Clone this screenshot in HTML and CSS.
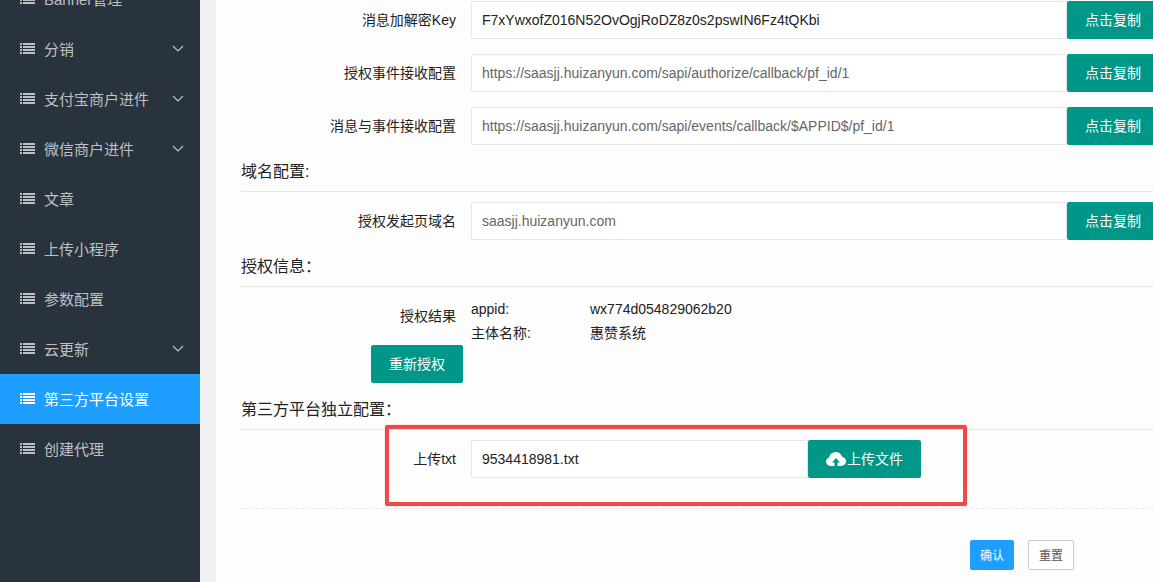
FILE: index.html
```html
<!DOCTYPE html>
<html lang="zh-CN">
<head>
  <meta charset="UTF-8" />
  <meta name="viewport" content="width=device-width, initial-scale=1.0"/>
  <title>第三方平台设置</title>
  <link rel="stylesheet" href="styles.css">
</head>
<body>
  <svg width="0" height="0" class="sprite" aria-hidden="true">
    <symbol id="icon-list" viewBox="0 0 15 11">
      <path d="M0 0h2v2H0zM3 0h12v2H3zM0 3h2v2H0zM3 3h12v2H3zM0 6h2v2H0zM3 6h12v2H3zM0 9h2v2H0zM3 9h12v2H3z"/>
    </symbol>
    <symbol id="icon-down" viewBox="0 0 12 8">
      <path d="M1 1l5 5 5-5" fill="none" stroke="currentColor" stroke-width="1.2"/>
    </symbol>
  </svg>

  <div class="layout">
    <!-- SIDE MENU -->
    <nav class="side">
      <a href="#" class="side-item"><svg class="list"><use href="#icon-list"/></svg><span>Banner管理</span></a>
      <a href="#" class="side-item"><svg class="list"><use href="#icon-list"/></svg><span>分销</span><svg class="down"><use href="#icon-down"/></svg></a>
      <a href="#" class="side-item"><svg class="list"><use href="#icon-list"/></svg><span>支付宝商户进件</span><svg class="down"><use href="#icon-down"/></svg></a>
      <a href="#" class="side-item"><svg class="list"><use href="#icon-list"/></svg><span>微信商户进件</span><svg class="down"><use href="#icon-down"/></svg></a>
      <a href="#" class="side-item"><svg class="list"><use href="#icon-list"/></svg><span>文章</span></a>
      <a href="#" class="side-item"><svg class="list"><use href="#icon-list"/></svg><span>上传小程序</span></a>
      <a href="#" class="side-item"><svg class="list"><use href="#icon-list"/></svg><span>参数配置</span></a>
      <a href="#" class="side-item"><svg class="list"><use href="#icon-list"/></svg><span>云更新</span><svg class="down"><use href="#icon-down"/></svg></a>
      <a href="#" class="side-item active"><svg class="list"><use href="#icon-list"/></svg><span>第三方平台设置</span></a>
      <a href="#" class="side-item"><svg class="list"><use href="#icon-list"/></svg><span>创建代理</span></a>
    </nav>

    <!-- SETTINGS FORM -->
    <main class="main">
      <form class="form">
        <div class="row">
          <label for="key">消息加解密Key</label>
          <input type="text" id="key" class="dark" value="F7xYwxofZ016N52OvOgjRoDZ8z0s2pswIN6Fz4tQKbi">
          <button type="button" class="btn">点击复制</button>
        </div>
        <div class="row">
          <label for="auth_url">授权事件接收配置</label>
          <input type="text" id="auth_url" value="https://saasjj.huizanyun.com/sapi/authorize/callback/pf_id/1" readonly>
          <button type="button" class="btn">点击复制</button>
        </div>
        <div class="row">
          <label for="event_url">消息与事件接收配置</label>
          <input type="text" id="event_url" value="https://saasjj.huizanyun.com/sapi/events/callback/$APPID$/pf_id/1" readonly>
          <button type="button" class="btn">点击复制</button>
        </div>

        <h2>域名配置:</h2>
        <div class="row">
          <label for="domain">授权发起页域名</label>
          <input type="text" id="domain" value="saasjj.huizanyun.com" readonly>
          <button type="button" class="btn">点击复制</button>
        </div>

        <h2>授权信息：</h2>
        <div class="result">
          <span class="result-label">授权结果</span>
          <dl>
            <dt>appid:</dt>
            <dd>wx774d054829062b20</dd>
            <dt>主体名称:</dt>
            <dd>惠赞系统</dd>
          </dl>
        </div>
        <div class="reauth">
          <button type="button" class="btn">重新授权</button>
        </div>

        <h2>第三方平台独立配置：</h2>
        <div class="row upload">
          <label for="txt">上传txt</label>
          <input type="text" id="txt" class="dark" value="9534418981.txt">
          <button type="button" class="btn">
            <svg class="cloud" viewBox="0 0 20 14" aria-hidden="true">
              <path fill="currentColor" fill-rule="evenodd" d="M5 14C2 14 0 12 0 9.500 0 7.500 1.300 6 3.300 5.500 3.800 2.300 6.500 0 9.800 0c2.900 0 5.200 1.700 6 4.500C18.300 5 20 7 20 9.300 20 12 18 14 15.200 14H11.500V10.500h2.500L10 6 6 10.500h2.500V14z"/>
            </svg>上传文件
          </button>
          <div class="highlight"></div>
        </div>

        <div class="actions">
          <button type="submit" class="btn-small primary">确认</button>
          <button type="reset" class="btn-small">重置</button>
        </div>
      </form>
    </main>
  </div>
</body>
</html>
```
FILE: styles.css
```css
* {
  box-sizing: border-box;
}

body {
  margin: 0;
  font-family: "Liberation Sans", "Noto Sans CJK SC", sans-serif;
  font-size: 14px;
  line-height: 24px;
  color: #222;
  background: #f1f1f1;
  overflow: hidden;
}

button, input {
  font-family: inherit;
  font-size: 14px;
}

.sprite {
  position: absolute;
}

.layout {
  display: flex;
  min-height: 100vh;
}

/* side menu */
.side {
  flex: 0 0 200px;
  margin-top: -26px;
  background: #28333e;
}

.side-item {
  display: flex;
  align-items: center;
  height: 50px;
  padding: 0 16px 0 20px;
  font-size: 15px;
  color: #bfc0c2;
  text-decoration: none;
}

.side-item span {
  padding-top: 2px;
}

.side-item.active {
  background: #1e9fff;
  color: #fff;
}

.list {
  width: 15px;
  height: 11px;
  margin: 0 9px 1px 0;
  fill: currentColor;
}

.down {
  width: 12px;
  height: 8px;
  margin-left: auto;
}

/* form */
.main {
  flex: 1;
  min-width: 0;
  margin-left: 16px;
  padding: 1px 0 12px 25px;
  background: #fdfdfd;
  overflow: hidden;
}

.form {
  margin-right: -6px;
}

.row {
  display: flex;
  margin-bottom: 15px;
}

.row label,
.result-label {
  flex: 0 0 230px;
  padding-right: 15px;
  line-height: 38px;
  text-align: right;
}

.row input {
  flex: 1;
  min-width: 0;
  height: 38px;
  padding: 0 10px;
  border: 1px solid #e6e6e6;
  border-radius: 2px;
  background: #fff;
  color: #666;
}

.row input.dark {
  color: #222;
}

.btn {
  height: 38px;
  padding: 0 18px 2px;
  border: none;
  border-radius: 2px;
  background: #009688;
  color: #fff;
  white-space: nowrap;
  cursor: pointer;
}

h2 {
  margin: 0 0 10px;
  padding-bottom: 7px;
  border-bottom: 1px solid #e6e6e6;
  font-size: 16px;
  font-weight: 400;
  line-height: 24px;
}

.result {
  display: flex;
}

.result dl {
  display: grid;
  grid-template-columns: 119px auto;
  margin: 0;
}

.result dd {
  margin: 0;
}

.reauth {
  display: flex;
  margin: 0 0 15px 130px;
}

.upload {
  position: relative;
  margin-bottom: 30px;
}

.upload input {
  flex: 0 1 337px;
}

.cloud {
  width: 20px;
  height: 14px;
  margin-right: 1px;
  vertical-align: -2px;
}

.highlight {
  position: absolute;
  top: -15px;
  left: 144px;
  width: 582px;
  height: 81px;
  border: 4px solid #ee4a4b;
  border-radius: 2px;
  box-shadow: 0 0 1px #ee4a4b;
  pointer-events: none;
}

.actions {
  display: flex;
  justify-content: flex-end;
  gap: 14px;
  padding: 31px 85px 0 0;
  border-top: 1px dashed #e6e6e6;
}

.btn-small {
  height: 30px;
  padding: 0 10px 2px;
  border: 1px solid #c9c9c9;
  border-radius: 2px;
  background: #fff;
  color: #555;
  font-size: 12px;
  cursor: pointer;
}

.btn-small.primary {
  border: none;
  background: #1e9fff;
  color: #fff;
}
```
